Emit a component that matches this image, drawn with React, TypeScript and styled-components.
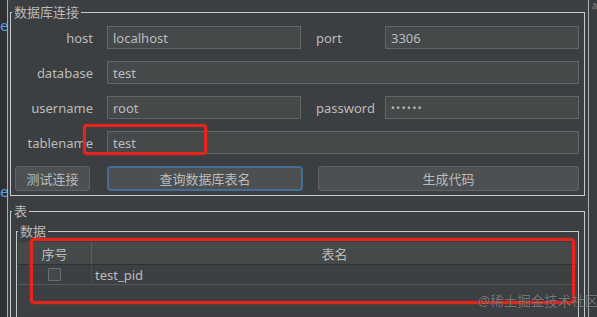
import styled, { createGlobalStyle } from "styled-components";

const GlobalStyle = createGlobalStyle`
  html, body {
    margin: 0;
    padding: 0;
    background: #3c3f41;
  }
  body {
    font-family: "Noto Sans", "Noto Sans CJK SC", sans-serif;
    font-size: 13px;
    color: #bbbbbb;
  }
`;

const Frame = styled.div`
  position: relative;
  display: flex;
  width: 597px;
  height: 317px;
  overflow: hidden;
  background: #3c3f41;
`;

const SideStrip = styled.div<{ $side: "left" | "right" }>`
  width: ${(p) => (p.$side === "left" ? "7px" : "8px")};
  flex: none;
  background: ${(p) => (p.$side === "left" ? "#2e3033" : "#3a3d3f")};
  ${(p) => (p.$side === "left" ? "border-right" : "border-left")}: 1px solid #a9aeb3;
  overflow: hidden;
  display: flex;
  flex-direction: column;
`;

const LinkStub = styled.span<{ $top: number }>`
  display: block;
  margin-top: ${(p) => p.$top}px;
  text-align: right;
  font-size: 15px;
  line-height: 16px;
  color: #5b9de8;
  white-space: nowrap;
`;

const TinyMark = styled.span`
  display: block;
  margin: 1px 0 0 3px;
  font-size: 9px;
  line-height: 10px;
  color: #8f8f8f;
`;

const Main = styled.div`
  flex: 1;
  display: flex;
  flex-direction: column;
  padding: 5px 3px 0 2px;
  min-width: 0;
`;

const Group = styled.fieldset<{ $gap?: number }>`
  margin: ${(p) => p.$gap ?? 0}px 0 0 0;
  padding: 0;
  min-width: 0;
  border: 1px solid #c6c9cc;
  border-radius: 0;
`;

const Title = styled.legend`
  margin-left: 1px;
  padding: 0 2px;
  font-size: 13px;
  line-height: 14px;
  color: #bbbbbb;
`;

const FormBody = styled.div`
  padding: 7px 5px 4px 0;
`;

const FormGrid = styled.div`
  display: grid;
  grid-template-columns: 96px 194px 84px 1fr;
  grid-auto-rows: 23px;
  row-gap: 12px;
`;

const Label = styled.label<{ $align: "right" | "left" }>`
  display: flex;
  align-items: center;
  justify-content: ${(p) => (p.$align === "right" ? "flex-end" : "flex-start")};
  padding-right: ${(p) => (p.$align === "right" ? "14px" : "0")};
  padding-left: ${(p) => (p.$align === "left" ? "15px" : "0")};
  color: #bbbbbb;
`;

const Field = styled.div<{ $wide?: boolean; $secret?: boolean }>`
  grid-column: ${(p) => (p.$wide ? "2 / 5" : "auto")};
  display: flex;
  align-items: center;
  box-sizing: border-box;
  padding-left: 5px;
  background: #45494a;
  border: 1px solid #646464;
  color: #bbbbbb;
  font-size: ${(p) => (p.$secret ? "10px" : "13px")};
  letter-spacing: ${(p) => (p.$secret ? "1.6px" : "0")};
`;

const ButtonRow = styled.div`
  display: flex;
  margin-top: 12px;
  padding-left: 4px;
`;

const Button = styled.button<{ $width: number; $gap?: number; $focused?: boolean }>`
  width: ${(p) => p.$width}px;
  height: 25px;
  margin-left: ${(p) => p.$gap ?? 0}px;
  box-sizing: border-box;
  font-family: inherit;
  font-size: 13px;
  color: #bbbbbb;
  background: #4c5052;
  border: ${(p) => (p.$focused ? "2px solid #466d94" : "1px solid #5e6366")};
  border-radius: ${(p) => (p.$focused ? "4px" : "3px")};
  padding: 0;
`;

const TableGroupBody = styled.div`
  padding: 6px 5px 0 5px;
`;

const DataBody = styled.div`
  padding: 4px 1px 0 1px;
`;

const Table = styled.div`
  height: 120px;
  display: grid;
  grid-template-columns: 74px 1fr;
  grid-template-rows: 23px 20px 1fr;
  background: #3d4042;
`;

const HeadCell = styled.div<{ $first?: boolean }>`
  display: flex;
  align-items: center;
  justify-content: center;
  background: #45494a;
  border-bottom: 1px solid #2e3133;
  border-right: ${(p) => (p.$first ? "1px solid #5a5e60" : "none")};
  color: #bbbbbb;
`;

const Cell = styled.div<{ $first?: boolean }>`
  display: flex;
  align-items: center;
  justify-content: ${(p) => (p.$first ? "center" : "flex-start")};
  padding-left: ${(p) => (p.$first ? "0" : "3px")};
  border-bottom: 1px solid #55585a;
  border-right: ${(p) => (p.$first ? "1px solid #4a4d4f" : "none")};
  color: #bbbbbb;
`;

const CheckBox = styled.span`
  width: 13px;
  height: 13px;
  box-sizing: border-box;
  border: 1px solid #6b6e70;
  border-radius: 1px;
  background: #43494a;
`;

const Highlight = styled.div<{ $x: number; $y: number; $w: number; $h: number }>`
  position: absolute;
  left: ${(p) => p.$x}px;
  top: ${(p) => p.$y}px;
  width: ${(p) => p.$w}px;
  height: ${(p) => p.$h}px;
  box-sizing: border-box;
  border: 3px solid #e4251d;
  border-radius: 4px;
  box-shadow: 0 0 2px rgba(255, 40, 30, 0.55);
  pointer-events: none;
`;

const Watermark = styled.div`
  position: absolute;
  left: 478px;
  top: 293px;
  font-size: 13.5px;
  line-height: 17px;
  color: rgba(205, 205, 205, 0.5);
  text-shadow: 0 0 1px rgba(0, 0, 0, 0.6);
  white-space: nowrap;
`;

const App = () => {
  return (
    <>
      <GlobalStyle />
      <Frame>
        <SideStrip $side="left">
          <LinkStub $top={17}>e</LinkStub>
          <LinkStub $top={150}>e</LinkStub>
        </SideStrip>

        <Main>
          <Group>
            <Title>数据库连接</Title>
            <FormBody>
              <FormGrid>
                <Label $align="right">host</Label>
                <Field>localhost</Field>
                <Label $align="left">port</Label>
                <Field>3306</Field>

                <Label $align="right">database</Label>
                <Field $wide>test</Field>

                <Label $align="right">username</Label>
                <Field>root</Field>
                <Label $align="left">password</Label>
                <Field $secret>••••••</Field>

                <Label $align="right">tablename</Label>
                <Field $wide>test</Field>
              </FormGrid>

              <ButtonRow>
                <Button $width={75}>测试连接</Button>
                <Button $width={196} $gap={17} $focused>
                  查询数据库表名
                </Button>
                <Button $width={261} $gap={15}>生成代码</Button>
              </ButtonRow>
            </FormBody>
          </Group>

          <Group $gap={8}>
            <Title>表</Title>
            <TableGroupBody>
              <Group>
                <Title>数据</Title>
                <DataBody>
                  <Table>
                    <HeadCell $first>序号</HeadCell>
                    <HeadCell>表名</HeadCell>
                    <Cell $first>
                      <CheckBox />
                    </Cell>
                    <Cell>test_pid</Cell>
                  </Table>
                </DataBody>
              </Group>
            </TableGroupBody>
          </Group>
        </Main>

        <SideStrip $side="right">
          <TinyMark>ā</TinyMark>
        </SideStrip>

        <Highlight $x={83} $y={124} $w={124} $h={31} />
        <Highlight $x={30} $y={238} $w={545} $h={66} />
        <Watermark>@稀土掘金技术社区</Watermark>
      </Frame>
    </>
  );
};

export default App;
